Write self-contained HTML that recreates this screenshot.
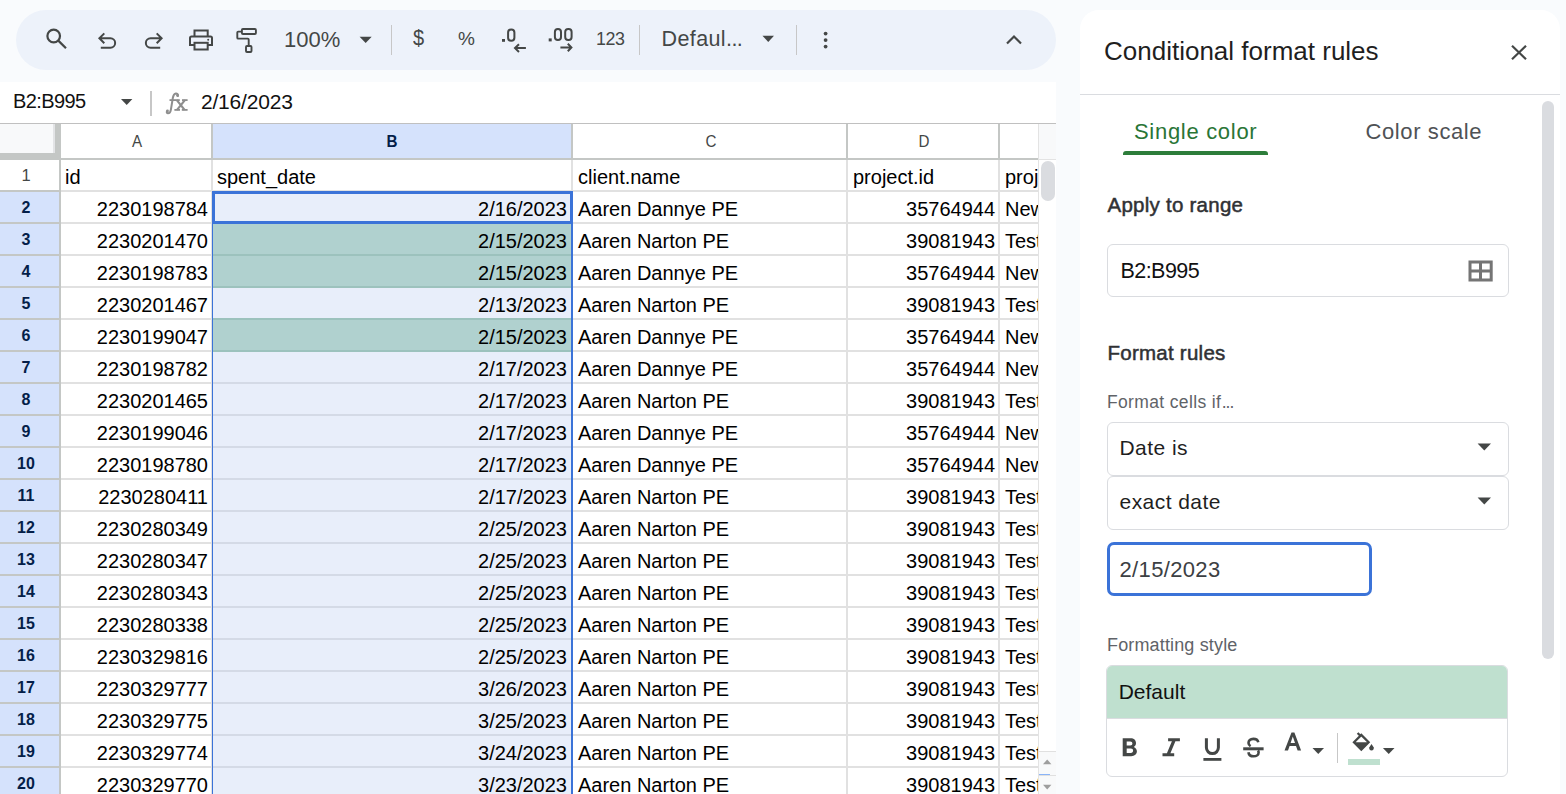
<!DOCTYPE html>
<html><head><meta charset="utf-8"><style>
html,body{margin:0;padding:0;}
body{width:1566px;height:794px;overflow:hidden;position:relative;background:#f9fbfd;font-family:"Liberation Sans", sans-serif;}
.t{position:absolute;white-space:nowrap;}
.r{position:absolute;}
.ov{position:absolute;left:0;top:0;}
b{font-weight:700;}
</style></head><body>
<div class="r" style="left:16px;top:10px;width:1040px;height:60px;background:#edf2fa;border-radius:30px;"></div>
<div class="t" style="left:284px;top:29.18px;font-size:22px;line-height:22px;color:#444746;font-weight:400;">100%</div>
<div class="t" style="left:596px;top:29.32px;font-size:19px;line-height:19px;color:#444746;font-weight:400;letter-spacing:-0.5px;transform:scaleX(0.94);transform-origin:0 0;">123</div>
<div class="t" style="left:661.5px;top:28.60px;font-size:21.5px;line-height:21.5px;color:#444746;font-weight:400;"><span style="letter-spacing:0.4px">Defaul</span><span style="letter-spacing:-0.6px">...</span></div>
<div class="t" style="left:413px;top:28.27px;font-size:20px;line-height:20px;color:#444746;font-weight:400;transform:scaleY(1.12);transform-origin:0 70%;">$</div>
<div class="t" style="left:458px;top:29.12px;font-size:19px;line-height:19px;color:#444746;font-weight:400;">%</div>
<div class="r" style="left:391px;top:25px;width:1px;height:30px;background:#c7c7c7;"></div>
<div class="r" style="left:639px;top:25px;width:1px;height:30px;background:#c7c7c7;"></div>
<div class="r" style="left:796px;top:25px;width:1px;height:30px;background:#c7c7c7;"></div>
<div class="r" style="left:0px;top:82px;width:1056px;height:41px;background:#ffffff;"></div>
<div class="t" style="left:13px;top:91.07px;font-size:20px;line-height:20px;color:#111111;font-weight:400;letter-spacing:-0.6px;">B2:B995</div>
<div class="r" style="left:150.3px;top:91px;width:1.5px;height:25px;background:#c7c7c7;"></div>
<div class="t" style="left:201px;top:91.12px;font-size:21px;line-height:21px;color:#111111;font-weight:400;letter-spacing:-0.2px;">2/16/2023</div>
<div class="r" style="left:0px;top:123px;width:1056px;height:1px;background:#c0c0c0;"></div>
<div class="r" style="left:0px;top:124px;width:1039px;height:670px;background:#ffffff;"></div>
<div class="r" style="left:0px;top:124px;width:55px;height:29px;background:#f8f9fa;"></div>
<div class="r" style="left:53px;top:124px;width:2px;height:29px;background:#e3e4e6;"></div>
<div class="r" style="left:55px;top:124px;width:6px;height:35px;background:#c4c7c5;"></div>
<div class="r" style="left:0px;top:153px;width:61px;height:6px;background:#c4c7c5;"></div>
<div class="r" style="left:213px;top:124px;width:358px;height:34px;background:#d5e2fc;"></div>
<div class="r" style="left:0px;top:158px;width:1038px;height:2px;background:#c4c7c5;"></div>
<div class="r" style="left:211px;top:124px;width:2px;height:34px;background:#c4c7c5;"></div>
<div class="r" style="left:571px;top:124px;width:2px;height:34px;background:#c4c7c5;"></div>
<div class="r" style="left:846px;top:124px;width:2px;height:34px;background:#c4c7c5;"></div>
<div class="r" style="left:998px;top:124px;width:2px;height:34px;background:#c4c7c5;"></div>
<div class="t" style="left:36.69999999999999px;width:200px;text-align:center;top:133.03px;font-size:16.5px;line-height:16.5px;color:#444746;font-weight:400;transform:scaleX(0.92);">A</div>
<div class="t" style="left:292.3px;width:200px;text-align:center;top:134.46px;font-size:16px;line-height:16px;color:#041e49;font-weight:700;transform:scaleX(0.95);"><b>B</b></div>
<div class="t" style="left:610.6px;width:200px;text-align:center;top:133.03px;font-size:16.5px;line-height:16.5px;color:#444746;font-weight:400;transform:scaleX(0.92);">C</div>
<div class="t" style="left:823.9px;width:200px;text-align:center;top:133.03px;font-size:16.5px;line-height:16.5px;color:#444746;font-weight:400;transform:scaleX(0.92);">D</div>
<div class="r" style="left:0px;top:190px;width:59px;height:604px;background:#d5e2fc;"></div>
<div class="r" style="left:59px;top:159px;width:2px;height:635px;background:#c4c7c5;"></div>
<div class="r" style="left:213px;top:192px;width:358px;height:602px;background:#e8eefa;"></div>
<div class="r" style="left:213px;top:224px;width:358px;height:30px;background:#b0d1cf;"></div>
<div class="r" style="left:213px;top:256px;width:358px;height:30px;background:#b0d1cf;"></div>
<div class="r" style="left:213px;top:320px;width:358px;height:30px;background:#b0d1cf;"></div>
<div class="r" style="left:0px;top:190px;width:59px;height:2px;background:#c4c7c5;"></div>
<div class="r" style="left:61px;top:190px;width:150px;height:2px;background:#e1e1e1;"></div>
<div class="r" style="left:213px;top:190px;width:358px;height:2px;background:#e1e1e1;"></div>
<div class="r" style="left:573px;top:190px;width:465px;height:2px;background:#e1e1e1;"></div>
<div class="r" style="left:0px;top:222px;width:59px;height:2px;background:#c4c7c5;"></div>
<div class="r" style="left:61px;top:222px;width:150px;height:2px;background:#e1e1e1;"></div>
<div class="r" style="left:213px;top:222px;width:358px;height:2px;background:#9cc2bd;"></div>
<div class="r" style="left:573px;top:222px;width:465px;height:2px;background:#e1e1e1;"></div>
<div class="r" style="left:0px;top:254px;width:59px;height:2px;background:#c4c7c5;"></div>
<div class="r" style="left:61px;top:254px;width:150px;height:2px;background:#e1e1e1;"></div>
<div class="r" style="left:213px;top:254px;width:358px;height:2px;background:#9cc2bd;"></div>
<div class="r" style="left:573px;top:254px;width:465px;height:2px;background:#e1e1e1;"></div>
<div class="r" style="left:0px;top:286px;width:59px;height:2px;background:#c4c7c5;"></div>
<div class="r" style="left:61px;top:286px;width:150px;height:2px;background:#e1e1e1;"></div>
<div class="r" style="left:213px;top:286px;width:358px;height:2px;background:#9cc2bd;"></div>
<div class="r" style="left:573px;top:286px;width:465px;height:2px;background:#e1e1e1;"></div>
<div class="r" style="left:0px;top:318px;width:59px;height:2px;background:#c4c7c5;"></div>
<div class="r" style="left:61px;top:318px;width:150px;height:2px;background:#e1e1e1;"></div>
<div class="r" style="left:213px;top:318px;width:358px;height:2px;background:#9cc2bd;"></div>
<div class="r" style="left:573px;top:318px;width:465px;height:2px;background:#e1e1e1;"></div>
<div class="r" style="left:0px;top:350px;width:59px;height:2px;background:#c4c7c5;"></div>
<div class="r" style="left:61px;top:350px;width:150px;height:2px;background:#e1e1e1;"></div>
<div class="r" style="left:213px;top:350px;width:358px;height:2px;background:#9cc2bd;"></div>
<div class="r" style="left:573px;top:350px;width:465px;height:2px;background:#e1e1e1;"></div>
<div class="r" style="left:0px;top:382px;width:59px;height:2px;background:#c4c7c5;"></div>
<div class="r" style="left:61px;top:382px;width:150px;height:2px;background:#e1e1e1;"></div>
<div class="r" style="left:213px;top:382px;width:358px;height:2px;background:#d4dae6;"></div>
<div class="r" style="left:573px;top:382px;width:465px;height:2px;background:#e1e1e1;"></div>
<div class="r" style="left:0px;top:414px;width:59px;height:2px;background:#c4c7c5;"></div>
<div class="r" style="left:61px;top:414px;width:150px;height:2px;background:#e1e1e1;"></div>
<div class="r" style="left:213px;top:414px;width:358px;height:2px;background:#d4dae6;"></div>
<div class="r" style="left:573px;top:414px;width:465px;height:2px;background:#e1e1e1;"></div>
<div class="r" style="left:0px;top:446px;width:59px;height:2px;background:#c4c7c5;"></div>
<div class="r" style="left:61px;top:446px;width:150px;height:2px;background:#e1e1e1;"></div>
<div class="r" style="left:213px;top:446px;width:358px;height:2px;background:#d4dae6;"></div>
<div class="r" style="left:573px;top:446px;width:465px;height:2px;background:#e1e1e1;"></div>
<div class="r" style="left:0px;top:478px;width:59px;height:2px;background:#c4c7c5;"></div>
<div class="r" style="left:61px;top:478px;width:150px;height:2px;background:#e1e1e1;"></div>
<div class="r" style="left:213px;top:478px;width:358px;height:2px;background:#d4dae6;"></div>
<div class="r" style="left:573px;top:478px;width:465px;height:2px;background:#e1e1e1;"></div>
<div class="r" style="left:0px;top:510px;width:59px;height:2px;background:#c4c7c5;"></div>
<div class="r" style="left:61px;top:510px;width:150px;height:2px;background:#e1e1e1;"></div>
<div class="r" style="left:213px;top:510px;width:358px;height:2px;background:#d4dae6;"></div>
<div class="r" style="left:573px;top:510px;width:465px;height:2px;background:#e1e1e1;"></div>
<div class="r" style="left:0px;top:542px;width:59px;height:2px;background:#c4c7c5;"></div>
<div class="r" style="left:61px;top:542px;width:150px;height:2px;background:#e1e1e1;"></div>
<div class="r" style="left:213px;top:542px;width:358px;height:2px;background:#d4dae6;"></div>
<div class="r" style="left:573px;top:542px;width:465px;height:2px;background:#e1e1e1;"></div>
<div class="r" style="left:0px;top:574px;width:59px;height:2px;background:#c4c7c5;"></div>
<div class="r" style="left:61px;top:574px;width:150px;height:2px;background:#e1e1e1;"></div>
<div class="r" style="left:213px;top:574px;width:358px;height:2px;background:#d4dae6;"></div>
<div class="r" style="left:573px;top:574px;width:465px;height:2px;background:#e1e1e1;"></div>
<div class="r" style="left:0px;top:606px;width:59px;height:2px;background:#c4c7c5;"></div>
<div class="r" style="left:61px;top:606px;width:150px;height:2px;background:#e1e1e1;"></div>
<div class="r" style="left:213px;top:606px;width:358px;height:2px;background:#d4dae6;"></div>
<div class="r" style="left:573px;top:606px;width:465px;height:2px;background:#e1e1e1;"></div>
<div class="r" style="left:0px;top:638px;width:59px;height:2px;background:#c4c7c5;"></div>
<div class="r" style="left:61px;top:638px;width:150px;height:2px;background:#e1e1e1;"></div>
<div class="r" style="left:213px;top:638px;width:358px;height:2px;background:#d4dae6;"></div>
<div class="r" style="left:573px;top:638px;width:465px;height:2px;background:#e1e1e1;"></div>
<div class="r" style="left:0px;top:670px;width:59px;height:2px;background:#c4c7c5;"></div>
<div class="r" style="left:61px;top:670px;width:150px;height:2px;background:#e1e1e1;"></div>
<div class="r" style="left:213px;top:670px;width:358px;height:2px;background:#d4dae6;"></div>
<div class="r" style="left:573px;top:670px;width:465px;height:2px;background:#e1e1e1;"></div>
<div class="r" style="left:0px;top:702px;width:59px;height:2px;background:#c4c7c5;"></div>
<div class="r" style="left:61px;top:702px;width:150px;height:2px;background:#e1e1e1;"></div>
<div class="r" style="left:213px;top:702px;width:358px;height:2px;background:#d4dae6;"></div>
<div class="r" style="left:573px;top:702px;width:465px;height:2px;background:#e1e1e1;"></div>
<div class="r" style="left:0px;top:734px;width:59px;height:2px;background:#c4c7c5;"></div>
<div class="r" style="left:61px;top:734px;width:150px;height:2px;background:#e1e1e1;"></div>
<div class="r" style="left:213px;top:734px;width:358px;height:2px;background:#d4dae6;"></div>
<div class="r" style="left:573px;top:734px;width:465px;height:2px;background:#e1e1e1;"></div>
<div class="r" style="left:0px;top:766px;width:59px;height:2px;background:#c4c7c5;"></div>
<div class="r" style="left:61px;top:766px;width:150px;height:2px;background:#e1e1e1;"></div>
<div class="r" style="left:213px;top:766px;width:358px;height:2px;background:#d4dae6;"></div>
<div class="r" style="left:573px;top:766px;width:465px;height:2px;background:#e1e1e1;"></div>
<div class="r" style="left:0px;top:798px;width:59px;height:2px;background:#c4c7c5;"></div>
<div class="r" style="left:61px;top:798px;width:150px;height:2px;background:#e1e1e1;"></div>
<div class="r" style="left:213px;top:798px;width:358px;height:2px;background:#d4dae6;"></div>
<div class="r" style="left:573px;top:798px;width:465px;height:2px;background:#e1e1e1;"></div>
<div class="r" style="left:211px;top:160px;width:2px;height:634px;background:#e1e1e1;"></div>
<div class="r" style="left:846px;top:160px;width:2px;height:634px;background:#e1e1e1;"></div>
<div class="r" style="left:998px;top:160px;width:2px;height:634px;background:#e1e1e1;"></div>
<div class="r" style="left:571px;top:160px;width:2px;height:31px;background:#e1e1e1;"></div>
<div class="t" style="left:-74px;width:200px;text-align:center;top:167.03px;font-size:16.5px;line-height:16.5px;color:#444746;font-weight:400;">1</div>
<div class="t" style="left:-74px;width:200px;text-align:center;top:199.66px;font-size:16px;line-height:16px;color:#041e49;font-weight:700;">2</div>
<div class="t" style="left:-74px;width:200px;text-align:center;top:231.66px;font-size:16px;line-height:16px;color:#041e49;font-weight:700;">3</div>
<div class="t" style="left:-74px;width:200px;text-align:center;top:263.66px;font-size:16px;line-height:16px;color:#041e49;font-weight:700;">4</div>
<div class="t" style="left:-74px;width:200px;text-align:center;top:295.66px;font-size:16px;line-height:16px;color:#041e49;font-weight:700;">5</div>
<div class="t" style="left:-74px;width:200px;text-align:center;top:327.66px;font-size:16px;line-height:16px;color:#041e49;font-weight:700;">6</div>
<div class="t" style="left:-74px;width:200px;text-align:center;top:359.66px;font-size:16px;line-height:16px;color:#041e49;font-weight:700;">7</div>
<div class="t" style="left:-74px;width:200px;text-align:center;top:391.66px;font-size:16px;line-height:16px;color:#041e49;font-weight:700;">8</div>
<div class="t" style="left:-74px;width:200px;text-align:center;top:423.66px;font-size:16px;line-height:16px;color:#041e49;font-weight:700;">9</div>
<div class="t" style="left:-74px;width:200px;text-align:center;top:455.66px;font-size:16px;line-height:16px;color:#041e49;font-weight:700;">10</div>
<div class="t" style="left:-74px;width:200px;text-align:center;top:487.66px;font-size:16px;line-height:16px;color:#041e49;font-weight:700;">11</div>
<div class="t" style="left:-74px;width:200px;text-align:center;top:519.66px;font-size:16px;line-height:16px;color:#041e49;font-weight:700;">12</div>
<div class="t" style="left:-74px;width:200px;text-align:center;top:551.66px;font-size:16px;line-height:16px;color:#041e49;font-weight:700;">13</div>
<div class="t" style="left:-74px;width:200px;text-align:center;top:583.66px;font-size:16px;line-height:16px;color:#041e49;font-weight:700;">14</div>
<div class="t" style="left:-74px;width:200px;text-align:center;top:615.66px;font-size:16px;line-height:16px;color:#041e49;font-weight:700;">15</div>
<div class="t" style="left:-74px;width:200px;text-align:center;top:647.66px;font-size:16px;line-height:16px;color:#041e49;font-weight:700;">16</div>
<div class="t" style="left:-74px;width:200px;text-align:center;top:679.66px;font-size:16px;line-height:16px;color:#041e49;font-weight:700;">17</div>
<div class="t" style="left:-74px;width:200px;text-align:center;top:711.66px;font-size:16px;line-height:16px;color:#041e49;font-weight:700;">18</div>
<div class="t" style="left:-74px;width:200px;text-align:center;top:743.66px;font-size:16px;line-height:16px;color:#041e49;font-weight:700;">19</div>
<div class="t" style="left:-74px;width:200px;text-align:center;top:775.66px;font-size:16px;line-height:16px;color:#041e49;font-weight:700;">20</div>
<div class="t" style="left:65px;top:167.07px;font-size:20px;line-height:20px;color:#000;font-weight:400;">id</div>
<div class="t" style="left:217px;top:167.07px;font-size:20px;line-height:20px;color:#000;font-weight:400;">spent_date</div>
<div class="t" style="left:578px;top:167.07px;font-size:20px;line-height:20px;color:#000;font-weight:400;">client.name</div>
<div class="t" style="left:853px;top:167.07px;font-size:20px;line-height:20px;color:#000;font-weight:400;">project.id</div>
<div class="t" style="left:1005px;top:167.07px;font-size:20px;line-height:20px;color:#000;font-weight:400;">proj</div>
<div class="t" style="right:1358px;top:199.07px;font-size:20px;line-height:20px;color:#000;font-weight:400;text-align:right;">2230198784</div>
<div class="t" style="right:999px;top:199.07px;font-size:20px;line-height:20px;color:#000;font-weight:400;text-align:right;">2/16/2023</div>
<div class="t" style="left:578px;top:199.07px;font-size:20px;line-height:20px;color:#000;font-weight:400;">Aaren Dannye PE</div>
<div class="t" style="right:571px;top:199.07px;font-size:20px;line-height:20px;color:#000;font-weight:400;text-align:right;">35764944</div>
<div class="t" style="left:1005px;top:199.07px;font-size:20px;line-height:20px;color:#000;font-weight:400;">New</div>
<div class="t" style="right:1358px;top:231.07px;font-size:20px;line-height:20px;color:#000;font-weight:400;text-align:right;">2230201470</div>
<div class="t" style="right:999px;top:231.07px;font-size:20px;line-height:20px;color:#000;font-weight:400;text-align:right;">2/15/2023</div>
<div class="t" style="left:578px;top:231.07px;font-size:20px;line-height:20px;color:#000;font-weight:400;">Aaren Narton PE</div>
<div class="t" style="right:571px;top:231.07px;font-size:20px;line-height:20px;color:#000;font-weight:400;text-align:right;">39081943</div>
<div class="t" style="left:1005px;top:231.07px;font-size:20px;line-height:20px;color:#000;font-weight:400;">Test</div>
<div class="t" style="right:1358px;top:263.07px;font-size:20px;line-height:20px;color:#000;font-weight:400;text-align:right;">2230198783</div>
<div class="t" style="right:999px;top:263.07px;font-size:20px;line-height:20px;color:#000;font-weight:400;text-align:right;">2/15/2023</div>
<div class="t" style="left:578px;top:263.07px;font-size:20px;line-height:20px;color:#000;font-weight:400;">Aaren Dannye PE</div>
<div class="t" style="right:571px;top:263.07px;font-size:20px;line-height:20px;color:#000;font-weight:400;text-align:right;">35764944</div>
<div class="t" style="left:1005px;top:263.07px;font-size:20px;line-height:20px;color:#000;font-weight:400;">New</div>
<div class="t" style="right:1358px;top:295.07px;font-size:20px;line-height:20px;color:#000;font-weight:400;text-align:right;">2230201467</div>
<div class="t" style="right:999px;top:295.07px;font-size:20px;line-height:20px;color:#000;font-weight:400;text-align:right;">2/13/2023</div>
<div class="t" style="left:578px;top:295.07px;font-size:20px;line-height:20px;color:#000;font-weight:400;">Aaren Narton PE</div>
<div class="t" style="right:571px;top:295.07px;font-size:20px;line-height:20px;color:#000;font-weight:400;text-align:right;">39081943</div>
<div class="t" style="left:1005px;top:295.07px;font-size:20px;line-height:20px;color:#000;font-weight:400;">Test</div>
<div class="t" style="right:1358px;top:327.07px;font-size:20px;line-height:20px;color:#000;font-weight:400;text-align:right;">2230199047</div>
<div class="t" style="right:999px;top:327.07px;font-size:20px;line-height:20px;color:#000;font-weight:400;text-align:right;">2/15/2023</div>
<div class="t" style="left:578px;top:327.07px;font-size:20px;line-height:20px;color:#000;font-weight:400;">Aaren Dannye PE</div>
<div class="t" style="right:571px;top:327.07px;font-size:20px;line-height:20px;color:#000;font-weight:400;text-align:right;">35764944</div>
<div class="t" style="left:1005px;top:327.07px;font-size:20px;line-height:20px;color:#000;font-weight:400;">New</div>
<div class="t" style="right:1358px;top:359.07px;font-size:20px;line-height:20px;color:#000;font-weight:400;text-align:right;">2230198782</div>
<div class="t" style="right:999px;top:359.07px;font-size:20px;line-height:20px;color:#000;font-weight:400;text-align:right;">2/17/2023</div>
<div class="t" style="left:578px;top:359.07px;font-size:20px;line-height:20px;color:#000;font-weight:400;">Aaren Dannye PE</div>
<div class="t" style="right:571px;top:359.07px;font-size:20px;line-height:20px;color:#000;font-weight:400;text-align:right;">35764944</div>
<div class="t" style="left:1005px;top:359.07px;font-size:20px;line-height:20px;color:#000;font-weight:400;">New</div>
<div class="t" style="right:1358px;top:391.07px;font-size:20px;line-height:20px;color:#000;font-weight:400;text-align:right;">2230201465</div>
<div class="t" style="right:999px;top:391.07px;font-size:20px;line-height:20px;color:#000;font-weight:400;text-align:right;">2/17/2023</div>
<div class="t" style="left:578px;top:391.07px;font-size:20px;line-height:20px;color:#000;font-weight:400;">Aaren Narton PE</div>
<div class="t" style="right:571px;top:391.07px;font-size:20px;line-height:20px;color:#000;font-weight:400;text-align:right;">39081943</div>
<div class="t" style="left:1005px;top:391.07px;font-size:20px;line-height:20px;color:#000;font-weight:400;">Test</div>
<div class="t" style="right:1358px;top:423.07px;font-size:20px;line-height:20px;color:#000;font-weight:400;text-align:right;">2230199046</div>
<div class="t" style="right:999px;top:423.07px;font-size:20px;line-height:20px;color:#000;font-weight:400;text-align:right;">2/17/2023</div>
<div class="t" style="left:578px;top:423.07px;font-size:20px;line-height:20px;color:#000;font-weight:400;">Aaren Dannye PE</div>
<div class="t" style="right:571px;top:423.07px;font-size:20px;line-height:20px;color:#000;font-weight:400;text-align:right;">35764944</div>
<div class="t" style="left:1005px;top:423.07px;font-size:20px;line-height:20px;color:#000;font-weight:400;">New</div>
<div class="t" style="right:1358px;top:455.07px;font-size:20px;line-height:20px;color:#000;font-weight:400;text-align:right;">2230198780</div>
<div class="t" style="right:999px;top:455.07px;font-size:20px;line-height:20px;color:#000;font-weight:400;text-align:right;">2/17/2023</div>
<div class="t" style="left:578px;top:455.07px;font-size:20px;line-height:20px;color:#000;font-weight:400;">Aaren Dannye PE</div>
<div class="t" style="right:571px;top:455.07px;font-size:20px;line-height:20px;color:#000;font-weight:400;text-align:right;">35764944</div>
<div class="t" style="left:1005px;top:455.07px;font-size:20px;line-height:20px;color:#000;font-weight:400;">New</div>
<div class="t" style="right:1358px;top:487.07px;font-size:20px;line-height:20px;color:#000;font-weight:400;text-align:right;">2230280411</div>
<div class="t" style="right:999px;top:487.07px;font-size:20px;line-height:20px;color:#000;font-weight:400;text-align:right;">2/17/2023</div>
<div class="t" style="left:578px;top:487.07px;font-size:20px;line-height:20px;color:#000;font-weight:400;">Aaren Narton PE</div>
<div class="t" style="right:571px;top:487.07px;font-size:20px;line-height:20px;color:#000;font-weight:400;text-align:right;">39081943</div>
<div class="t" style="left:1005px;top:487.07px;font-size:20px;line-height:20px;color:#000;font-weight:400;">Test</div>
<div class="t" style="right:1358px;top:519.07px;font-size:20px;line-height:20px;color:#000;font-weight:400;text-align:right;">2230280349</div>
<div class="t" style="right:999px;top:519.07px;font-size:20px;line-height:20px;color:#000;font-weight:400;text-align:right;">2/25/2023</div>
<div class="t" style="left:578px;top:519.07px;font-size:20px;line-height:20px;color:#000;font-weight:400;">Aaren Narton PE</div>
<div class="t" style="right:571px;top:519.07px;font-size:20px;line-height:20px;color:#000;font-weight:400;text-align:right;">39081943</div>
<div class="t" style="left:1005px;top:519.07px;font-size:20px;line-height:20px;color:#000;font-weight:400;">Test</div>
<div class="t" style="right:1358px;top:551.07px;font-size:20px;line-height:20px;color:#000;font-weight:400;text-align:right;">2230280347</div>
<div class="t" style="right:999px;top:551.07px;font-size:20px;line-height:20px;color:#000;font-weight:400;text-align:right;">2/25/2023</div>
<div class="t" style="left:578px;top:551.07px;font-size:20px;line-height:20px;color:#000;font-weight:400;">Aaren Narton PE</div>
<div class="t" style="right:571px;top:551.07px;font-size:20px;line-height:20px;color:#000;font-weight:400;text-align:right;">39081943</div>
<div class="t" style="left:1005px;top:551.07px;font-size:20px;line-height:20px;color:#000;font-weight:400;">Test</div>
<div class="t" style="right:1358px;top:583.07px;font-size:20px;line-height:20px;color:#000;font-weight:400;text-align:right;">2230280343</div>
<div class="t" style="right:999px;top:583.07px;font-size:20px;line-height:20px;color:#000;font-weight:400;text-align:right;">2/25/2023</div>
<div class="t" style="left:578px;top:583.07px;font-size:20px;line-height:20px;color:#000;font-weight:400;">Aaren Narton PE</div>
<div class="t" style="right:571px;top:583.07px;font-size:20px;line-height:20px;color:#000;font-weight:400;text-align:right;">39081943</div>
<div class="t" style="left:1005px;top:583.07px;font-size:20px;line-height:20px;color:#000;font-weight:400;">Test</div>
<div class="t" style="right:1358px;top:615.07px;font-size:20px;line-height:20px;color:#000;font-weight:400;text-align:right;">2230280338</div>
<div class="t" style="right:999px;top:615.07px;font-size:20px;line-height:20px;color:#000;font-weight:400;text-align:right;">2/25/2023</div>
<div class="t" style="left:578px;top:615.07px;font-size:20px;line-height:20px;color:#000;font-weight:400;">Aaren Narton PE</div>
<div class="t" style="right:571px;top:615.07px;font-size:20px;line-height:20px;color:#000;font-weight:400;text-align:right;">39081943</div>
<div class="t" style="left:1005px;top:615.07px;font-size:20px;line-height:20px;color:#000;font-weight:400;">Test</div>
<div class="t" style="right:1358px;top:647.07px;font-size:20px;line-height:20px;color:#000;font-weight:400;text-align:right;">2230329816</div>
<div class="t" style="right:999px;top:647.07px;font-size:20px;line-height:20px;color:#000;font-weight:400;text-align:right;">2/25/2023</div>
<div class="t" style="left:578px;top:647.07px;font-size:20px;line-height:20px;color:#000;font-weight:400;">Aaren Narton PE</div>
<div class="t" style="right:571px;top:647.07px;font-size:20px;line-height:20px;color:#000;font-weight:400;text-align:right;">39081943</div>
<div class="t" style="left:1005px;top:647.07px;font-size:20px;line-height:20px;color:#000;font-weight:400;">Test</div>
<div class="t" style="right:1358px;top:679.07px;font-size:20px;line-height:20px;color:#000;font-weight:400;text-align:right;">2230329777</div>
<div class="t" style="right:999px;top:679.07px;font-size:20px;line-height:20px;color:#000;font-weight:400;text-align:right;">3/26/2023</div>
<div class="t" style="left:578px;top:679.07px;font-size:20px;line-height:20px;color:#000;font-weight:400;">Aaren Narton PE</div>
<div class="t" style="right:571px;top:679.07px;font-size:20px;line-height:20px;color:#000;font-weight:400;text-align:right;">39081943</div>
<div class="t" style="left:1005px;top:679.07px;font-size:20px;line-height:20px;color:#000;font-weight:400;">Test</div>
<div class="t" style="right:1358px;top:711.07px;font-size:20px;line-height:20px;color:#000;font-weight:400;text-align:right;">2230329775</div>
<div class="t" style="right:999px;top:711.07px;font-size:20px;line-height:20px;color:#000;font-weight:400;text-align:right;">3/25/2023</div>
<div class="t" style="left:578px;top:711.07px;font-size:20px;line-height:20px;color:#000;font-weight:400;">Aaren Narton PE</div>
<div class="t" style="right:571px;top:711.07px;font-size:20px;line-height:20px;color:#000;font-weight:400;text-align:right;">39081943</div>
<div class="t" style="left:1005px;top:711.07px;font-size:20px;line-height:20px;color:#000;font-weight:400;">Test</div>
<div class="t" style="right:1358px;top:743.07px;font-size:20px;line-height:20px;color:#000;font-weight:400;text-align:right;">2230329774</div>
<div class="t" style="right:999px;top:743.07px;font-size:20px;line-height:20px;color:#000;font-weight:400;text-align:right;">3/24/2023</div>
<div class="t" style="left:578px;top:743.07px;font-size:20px;line-height:20px;color:#000;font-weight:400;">Aaren Narton PE</div>
<div class="t" style="right:571px;top:743.07px;font-size:20px;line-height:20px;color:#000;font-weight:400;text-align:right;">39081943</div>
<div class="t" style="left:1005px;top:743.07px;font-size:20px;line-height:20px;color:#000;font-weight:400;">Test</div>
<div class="t" style="right:1358px;top:775.07px;font-size:20px;line-height:20px;color:#000;font-weight:400;text-align:right;">2230329770</div>
<div class="t" style="right:999px;top:775.07px;font-size:20px;line-height:20px;color:#000;font-weight:400;text-align:right;">3/23/2023</div>
<div class="t" style="left:578px;top:775.07px;font-size:20px;line-height:20px;color:#000;font-weight:400;">Aaren Narton PE</div>
<div class="t" style="right:571px;top:775.07px;font-size:20px;line-height:20px;color:#000;font-weight:400;text-align:right;">39081943</div>
<div class="t" style="left:1005px;top:775.07px;font-size:20px;line-height:20px;color:#000;font-weight:400;">Test</div>
<div class="r" style="left:211.5px;top:192px;width:1.5px;height:602px;background:#3b73d8;"></div>
<div class="r" style="left:571px;top:192px;width:1.5px;height:602px;background:#3b73d8;"></div>
<div class="r" style="left:212px;top:191px;width:355px;height:27px;border:3px solid #3b73d8;"></div>
<div class="r" style="left:1039px;top:124px;width:17px;height:670px;background:#ffffff;"></div>
<div class="r" style="left:1039px;top:124px;width:17px;height:35px;background:#f8f9fa;"></div>
<div class="r" style="left:1039px;top:159px;width:17px;height:1px;background:#e3e3e3;"></div>
<div class="r" style="left:1038px;top:124px;width:1px;height:670px;background:#e3e3e3;"></div>
<div class="r" style="left:1041px;top:161px;width:14px;height:40px;background:#dadce0;border-radius:7px;"></div>
<div class="r" style="left:1039px;top:751px;width:17px;height:43px;background:#f8f9fa;"></div>
<div class="r" style="left:1039px;top:751px;width:17px;height:1px;background:#e0e0e0;"></div>
<div class="r" style="left:1039px;top:775px;width:17px;height:1px;background:#e0e0e0;"></div>
<div class="r" style="left:1080px;top:10px;width:480px;height:800px;background:#ffffff;border-radius:19px 19px 0 0;"></div>
<div class="t" style="left:1104px;top:38.29px;font-size:26px;line-height:26px;color:#1f1f1f;font-weight:400;">Conditional format rules</div>
<div class="r" style="left:1080px;top:94px;width:480px;height:1px;background:#dadce0;"></div>
<div class="r" style="left:1542px;top:101px;width:12px;height:558px;background:#dadce0;border-radius:6px;"></div>
<div class="t" style="left:1134px;top:120.58px;font-size:22px;line-height:22px;color:#2a7536;font-weight:400;letter-spacing:0.7px;">Single color</div>
<div class="t" style="left:1365.5px;top:120.58px;font-size:22px;line-height:22px;color:#4f5255;font-weight:400;letter-spacing:0.6px;">Color scale</div>
<div class="r" style="left:1123px;top:151px;width:145px;height:4px;background:#2d7d3a;border-radius:3px 3px 0 0;"></div>
<div class="t" style="left:1107.5px;top:194.85px;font-size:20.5px;line-height:20.5px;color:#303134;font-weight:400;letter-spacing:0.25px;-webkit-text-stroke:0.5px #303134;">Apply to range</div>
<div class="r" style="left:1107px;top:244px;width:402px;height:53px;background:#fff;box-sizing:border-box;border:1px solid #dadce0;border-radius:6px;"></div>
<div class="t" style="left:1120.5px;top:261.40px;font-size:21.5px;line-height:21.5px;color:#111111;font-weight:400;letter-spacing:-0.55px;">B2:B995</div>
<div class="t" style="left:1107.5px;top:343.35px;font-size:20.5px;line-height:20.5px;color:#303134;font-weight:400;letter-spacing:0.25px;-webkit-text-stroke:0.5px #303134;">Format rules</div>
<div class="t" style="left:1107px;top:393.99px;font-size:17.5px;line-height:17.5px;color:#5f6368;font-weight:400;"><span style="letter-spacing:0.35px">Format cells if</span><span style="letter-spacing:-1px;margin-left:0.5px">...</span></div>
<div class="r" style="left:1107px;top:422px;width:402px;height:54px;background:#fff;box-sizing:border-box;border:1px solid #dadce0;border-radius:6px;"></div>
<div class="r" style="left:1107px;top:476px;width:402px;height:54px;background:transparent;box-sizing:border-box;border:1px solid #dadce0;border-radius:6px;"></div>
<div class="t" style="left:1119.5px;top:437.42px;font-size:21px;line-height:21px;color:#1f1f1f;font-weight:400;letter-spacing:0.45px;">Date is</div>
<div class="t" style="left:1119.5px;top:490.82px;font-size:21px;line-height:21px;color:#1f1f1f;font-weight:400;letter-spacing:0.45px;">exact date</div>
<div class="r" style="left:1107px;top:542px;width:265px;height:54px;background:#fff;box-sizing:border-box;border:3px solid #3b73d8;border-radius:7px;"></div>
<div class="t" style="left:1119.5px;top:558.88px;font-size:22px;line-height:22px;color:#3c4043;font-weight:400;letter-spacing:0.35px;">2/15/2023</div>
<div class="t" style="left:1107px;top:636.06px;font-size:18px;line-height:18px;color:#5f6368;font-weight:400;letter-spacing:0.15px;">Formatting style</div>
<div class="r" style="left:1106px;top:665px;width:402px;height:112px;background:#fff;box-sizing:border-box;border:1px solid #dadce0;border-radius:6px;"></div>
<div class="r" style="left:1107px;top:666px;width:400px;height:52px;background:#bfe0cf;border-radius:5px 5px 0 0;"></div>
<div class="r" style="left:1107px;top:718px;width:400px;height:1px;background:#dadce0;"></div>
<div class="t" style="left:1118.7px;top:681.02px;font-size:21px;line-height:21px;color:#111111;font-weight:400;">Default</div>
<div class="r" style="left:1337px;top:733px;width:1px;height:30px;background:#c7c7c7;"></div>

<svg class="ov" width="1566" height="794" viewBox="0 0 1566 794">
 <g fill="none" stroke="#444746" stroke-width="2.2">
  <circle cx="53.7" cy="36" r="6.3"/>
  <path d="M58.3 40.6 L66 48.3"/>
  <path d="M104.3 33.4 L99.4 38.3 L104.3 43.2 M99.6 38.3 H110.4 A4.75 4.75 0 0 1 110.4 47.8 H100.8" stroke-width="2"/>
  <path d="M156.7 33.4 L161.6 38.3 L156.7 43.2 M161.4 38.3 H150.6 A4.75 4.75 0 0 0 150.6 47.8 H160.2" stroke-width="2"/>
 </g>
 <g fill="none" stroke="#444746" stroke-width="2">
  <path d="M194.5 36 V30.5 H207.7 V36"/>
  <path d="M194.5 45 H190 V38 Q190 36.5 191.5 36.5 H210.5 Q212 36.5 212 38 V45 H207.7"/>
  <rect x="194.5" y="42.8" width="13.2" height="6.7"/>
  <rect x="241.9" y="29" width="14" height="5" rx="1" stroke-width="1.9"/>
  <path d="M241.9 31.6 H238.2 Q237.3 31.6 237.3 32.5 V37.7 Q237.3 38.6 238.2 38.6 H247.8 Q248.7 38.6 248.7 39.5 V46" stroke-width="1.9"/>
  <rect x="246" y="46" width="5.5" height="6" rx="1" stroke-width="1.9"/>
 </g>
 <circle cx="208.2" cy="39.8" r="1" fill="#444746"/>
 <path d="M359.6 36.8 H371.7 L365.65 43 Z" fill="#444746"/>
 <path d="M762.5 35.8 H774 L768.25 42 Z" fill="#444746"/>
 <path d="M121 99 H132.4 L126.7 105 Z" fill="#444746"/>
 <g fill="#444746"><circle cx="825.6" cy="33.6" r="1.9"/><circle cx="825.6" cy="40.1" r="1.9"/><circle cx="825.6" cy="46.6" r="1.9"/></g>
 <path d="M1007 43.5 L1014 36.5 L1021 43.5" fill="none" stroke="#444746" stroke-width="2.2"/>
 <path d="M1512 45.8 L1526 59.3 M1526 45.8 L1512 59.3" stroke="#444746" stroke-width="2.2"/>
 <g fill="none" stroke="#757575" stroke-width="3">
  <rect x="1470" y="262" width="21.2" height="18"/>
  <path d="M1469.8 271 H1491.3 M1480.5 261.9 V280.2"/>
 </g>
 <path d="M1477.6 443.5 H1491 L1484.3 450.6 Z" fill="#444746"/>
 <path d="M1477.6 497.5 H1491 L1484.3 504.6 Z" fill="#444746"/>
 <path d="M1043 764.2 L1047.2 759.4 L1051.4 764.2 Z" fill="#9e9e9e"/>
 <path d="M1043 784.8 L1047.2 789.4 L1051.4 784.8 Z" fill="#9e9e9e"/>
 <rect x="1039" y="774" width="11" height="1" fill="#8ab4f8"/>
 <g fill="none" stroke="#8e8e8e" stroke-width="2" stroke-linecap="round">
  <path d="M177.9 96 C178.3 94.2 177 93.3 175.8 93.4 C174 93.6 173.3 95.3 172.9 97.5 L170.9 109.6 C170.5 112 169.4 113.3 168 113.3 C167 113.3 166.5 112.4 166.9 111.4"/>
 </g>
 <g fill="#8e8e8e">
  <circle cx="177.5" cy="95.5" r="1.4"/><circle cx="167.5" cy="111" r="1.4"/>
  <rect x="169.5" y="99.2" width="10.3" height="1.8"/>
  <rect x="182" y="99.2" width="5.6" height="1.8"/>
  <rect x="174.4" y="109" width="5.6" height="1.8"/>
  <rect x="181.8" y="109" width="5.8" height="1.8"/>
 </g>
 <path d="M176.8 100.1 L184.6 109.9 M184.9 100.1 L177 109.9" stroke="#8e8e8e" stroke-width="2.2"/>
 <g fill="none" stroke="#444746" stroke-width="2">
  <rect x="508.1" y="29.4" width="6.3" height="11.4" rx="3.1"/>
  <rect x="554.9" y="29" width="6.1" height="11" rx="3"/>
  <rect x="565.2" y="29" width="6.4" height="11" rx="3"/>
  <path d="M525.9 48.1 H515.5 M519 44.3 L515 48.1 L519 51.9"/>
  <path d="M560.4 47.4 H571 M567.8 43.7 L571.4 47.4 L567.8 51.2"/>
 </g>
 <rect x="502" y="39" width="3" height="2.8" fill="#444746"/>
 <rect x="548.7" y="38.4" width="3" height="3" fill="#444746"/>
 <g fill="#444746">
  <path d="M1122.7 738.3 H1130.5 C1134 738.3 1136 740.3 1136 743.2 C1136 745 1135 746.3 1133.8 746.9 C1135.6 747.5 1136.9 749.2 1136.9 751.3 C1136.9 754.2 1134.6 756.2 1131.2 756.2 H1122.7 Z M1126.7 741.6 V745.6 H1130.2 C1131.6 745.6 1132.4 744.8 1132.4 743.6 C1132.4 742.4 1131.6 741.6 1130.2 741.6 Z M1126.7 748.6 V752.9 H1130.8 C1132.3 752.9 1133.1 752 1133.1 750.8 C1133.1 749.5 1132.3 748.6 1130.8 748.6 Z"/>
  <path d="M1168.1 738.3 H1179.9 V741.2 H1175.4 L1170.4 753.3 H1174.2 V756.2 H1162.5 V753.3 H1166.9 L1171.9 741.2 H1168.1 Z"/>
  <rect x="1203.4" y="758" width="18" height="2.8"/>
  <rect x="1243.2" y="747.3" width="20.4" height="3"/>
  <path d="M1284.5 750.6 L1291.5 732.4 H1294.4 L1301.1 750.6 H1297.6 L1296 746.1 H1289.6 L1288 750.6 Z M1290.6 743 H1295 L1292.8 736.6 Z"/>
  <path d="M1312.5 748.1 H1324 L1318.25 754 Z"/>
  <path d="M1382.9 748.1 H1394.5 L1388.7 754 Z"/>
  <path d="M1353 742.3 L1369.2 742.3 L1361.3 750.2 Z"/>
  <path d="M1371.5 744 L1373.6 747.2 A2.3 2.3 0 1 1 1369.4 747.2 Z"/>
 </g>
 <g fill="none" stroke="#444746" stroke-width="3">
  <path d="M1206.4 738.3 V747.6 A6 6 0 0 0 1218.4 747.6 V738.3"/>
 </g>
 <g fill="none" stroke="#444746" stroke-width="2.6">
  <path d="M1258.3 742.3 C1257.8 740 1256 738.9 1253.3 738.9 C1250.3 738.9 1248.5 740.7 1248.5 742.9 C1248.5 744.3 1249.2 745.3 1250.6 746.2"/>
  <path d="M1248.4 752.2 C1248.8 754.9 1250.9 756.3 1253.6 756.3 C1256.6 756.3 1258.6 754.6 1258.6 752.4 C1258.6 751.6 1258.4 750.9 1258 750.4"/>
 </g>
 <g fill="none" stroke="#444746" stroke-width="2.3">
  <path d="M1357.6 733 L1360.3 735.7 M1354 742.3 L1361.3 735 L1368.6 742.3 L1361.3 749.6 Z"/>
 </g>
 <rect x="1348" y="759" width="32" height="6" fill="#bfe0cf"/>
</svg>
</body></html>
